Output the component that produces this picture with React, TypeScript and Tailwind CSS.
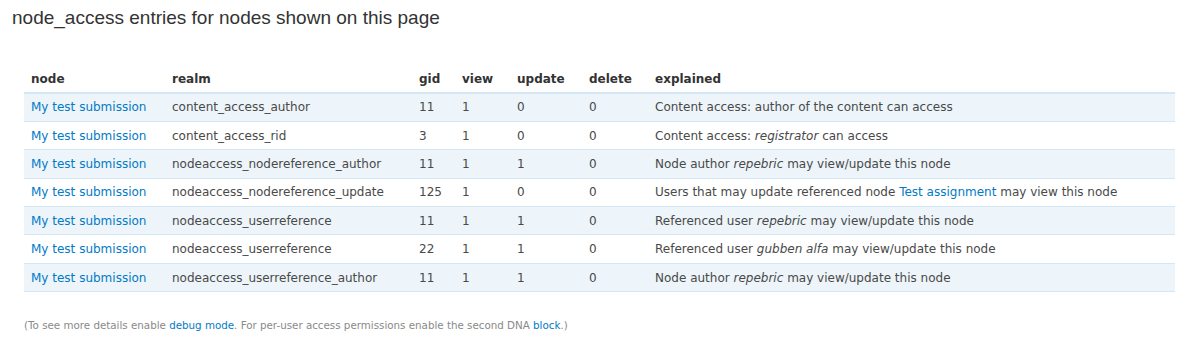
import React from 'react';

type Row = {
  realm: string;
  gid: number;
  view: number;
  update: number;
  del: number;
  explained: React.ReactNode;
};

const rows: Row[] = [
  { realm: 'content_access_author', gid: 11, view: 1, update: 0, del: 0, explained: <>Content access: author of the content can access</> },
  { realm: 'content_access_rid', gid: 3, view: 1, update: 0, del: 0, explained: <>Content access: <em>registrator</em> can access</> },
  { realm: 'nodeaccess_nodereference_author', gid: 11, view: 1, update: 1, del: 0, explained: <>Node author <em>repebric</em> may view/update this node</> },
  {
    realm: 'nodeaccess_nodereference_update',
    gid: 125,
    view: 1,
    update: 0,
    del: 0,
    explained: (
      <>
        Users that may update referenced node <a className="text-[#027ac6]" href="#">Test assignment</a> may view this node
      </>
    ),
  },
  { realm: 'nodeaccess_userreference', gid: 11, view: 1, update: 1, del: 0, explained: <>Referenced user <em>repebric</em> may view/update this node</> },
  { realm: 'nodeaccess_userreference', gid: 22, view: 1, update: 1, del: 0, explained: <>Referenced user <em>gubben alfa</em> may view/update this node</> },
  { realm: 'nodeaccess_userreference_author', gid: 11, view: 1, update: 1, del: 0, explained: <>Node author <em>repebric</em> may view/update this node</> },
];

export default function App() {
  return (
    <main className="min-h-screen bg-white text-[#494949]" style={{ fontFamily: '"DejaVu Sans", Verdana, sans-serif' }}>
      <h2
        className="pl-[12px] pt-[6px] text-[19px] leading-[24px] text-[#333]"
        style={{ fontFamily: '"Liberation Sans", Arial, sans-serif' }}
      >
        node_access entries for nodes shown on this page
      </h2>

      <table className="ml-[24px] mt-[35px] w-[1151px] border-collapse text-[12px]">
        <thead>
          <tr className="h-[28px] border-b-2 border-[#d3e7f4] text-left text-[#333]">
            <th className="w-[141px] pl-[7px] font-bold">node</th>
            <th className="w-[247px] pl-[7px] font-bold">realm</th>
            <th className="w-[43px] pl-[7px] font-bold">gid</th>
            <th className="w-[55px] pl-[7px] font-bold">view</th>
            <th className="w-[72px] pl-[7px] font-bold">update</th>
            <th className="w-[66px] pl-[7px] font-bold">delete</th>
            <th className="pl-[7px] font-bold">explained</th>
          </tr>
        </thead>
        <tbody>
          {rows.map((r, i) => (
            <tr key={i} className={`h-[28.4px] border-b border-[#d3e7f4] ${i % 2 === 0 ? 'bg-[#edf5fa]' : 'bg-white'}`}>
              <td className="pl-[7px]">
                <a className="text-[#027ac6]" href="#">My test submission</a>
              </td>
              <td className="pl-[7px]">{r.realm}</td>
              <td className="pl-[7px]">{r.gid}</td>
              <td className="pl-[7px]">{r.view}</td>
              <td className="pl-[7px]">{r.update}</td>
              <td className="pl-[7px]">{r.del}</td>
              <td className="pl-[7px]">{r.explained}</td>
            </tr>
          ))}
        </tbody>
      </table>

      <p className="ml-[24px] mt-[26px] text-[10.3px] text-[#898989]">
        (To see more details enable <a className="text-[#027ac6]" href="#">debug mode</a>. For per-user access permissions enable the second DNA{' '}
        <a className="text-[#027ac6]" href="#">block</a>.)
      </p>
    </main>
  );
}
